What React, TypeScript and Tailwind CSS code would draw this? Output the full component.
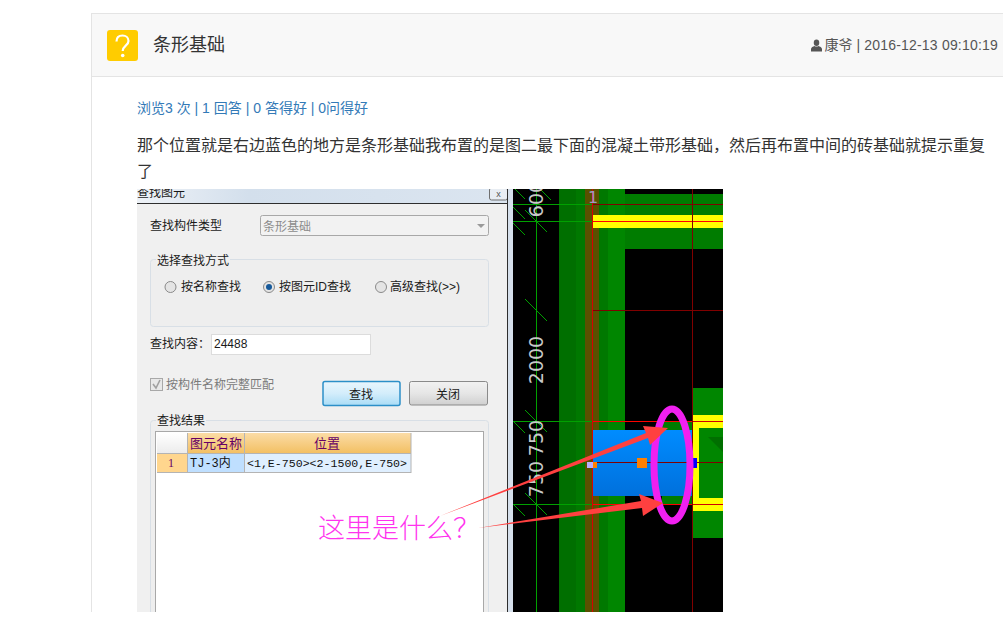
import type { ReactNode } from "react";

const SANS = "font-['Liberation_Sans','Noto_Sans_CJK_SC',sans-serif]";

// dialog label, 12px like the screenshot
function Label({ x, y, children, fill = "#1a1a1a" }: { x: number; y: number; children: ReactNode; fill?: string }) {
  return (
    <text x={x} y={y} fill={fill} fontSize="12" className={SANS}>
      {children}
    </text>
  );
}

function Radio({ cx, cy, on }: { cx: number; cy: number; on?: boolean }) {
  return (
    <g>
      <circle cx={cx} cy={cy} r="5.5" fill="#e4e4e4" stroke="#8a8a8a" />
      {on ? <circle cx={cx} cy={cy} r="3" fill="#16599a" /> : null}
    </g>
  );
}

function Tick({ x, y, size = 11 }: { x: number; y: number; size?: number }) {
  return <line x1={x - size} y1={y - size} x2={x + size} y2={y + size} stroke="#00a000" />;
}

function DimText({ x, y, children }: { x: number; y: number; children: ReactNode }) {
  return (
    <text
      x={x}
      y={y}
      fill="#c8c8c8"
      fontSize="19"
      textAnchor="middle"
      transform={`rotate(-90 ${x} ${y})`}
      className="font-['DejaVu_Sans',sans-serif]"
    >
      {children}
    </text>
  );
}

function Screenshot() {
  return (
    <svg viewBox="137 198 586 423" className="block h-[423px] w-[586px]">
      <defs>
        <linearGradient id="title" x1="0" x2="1" y1="0" y2="0">
          <stop offset="0" stopColor="#eef2f7" />
          <stop offset="0.3" stopColor="#d3dfec" />
          <stop offset="1" stopColor="#dbe5f0" />
        </linearGradient>
        <linearGradient id="btnBlue" x1="0" x2="0" y1="0" y2="1">
          <stop offset="0" stopColor="#eaf6fd" />
          <stop offset="0.5" stopColor="#d3edfb" />
          <stop offset="1" stopColor="#a9dcf6" />
        </linearGradient>
        <linearGradient id="btnGray" x1="0" x2="0" y1="0" y2="1">
          <stop offset="0" stopColor="#f2f2f2" />
          <stop offset="0.5" stopColor="#e6e6e6" />
          <stop offset="1" stopColor="#cfcfcf" />
        </linearGradient>
        <linearGradient id="headOrange" x1="0" x2="0" y1="0" y2="1">
          <stop offset="0" stopColor="#fbdca6" />
          <stop offset="1" stopColor="#f3c064" />
        </linearGradient>
        <linearGradient id="cell" x1="0" x2="0" y1="0" y2="1">
          <stop offset="0" stopColor="#ffffff" />
          <stop offset="1" stopColor="#ececec" />
        </linearGradient>
        <linearGradient id="blueBox" x1="0" x2="0" y1="0" y2="1">
          <stop offset="0" stopColor="#008cff" />
          <stop offset="1" stopColor="#0070dc" />
        </linearGradient>
      </defs>

      {/* dialog */}
      <rect x="137" y="198" width="371" height="423" fill="#f0f0f0" />
      <rect x="137" y="198" width="371" height="14" fill="url(#title)" />
      <line x1="137" x2="508" y1="212.5" y2="212.5" stroke="#2e2e2e" />
      <text x="137" y="206" fontSize="12" fill="#1a1a1a" className={SANS}>查找图元</text>
      <rect x="489.5" y="197" width="18" height="12" rx="2" fill="#e8edf3" stroke="#6f6f6f" />
      <text x="498.5" y="206" fontSize="9" fill="#555" textAnchor="middle" className={SANS}>x</text>
      <rect x="507" y="198" width="1" height="423" fill="#2e2e2e" />
      <rect x="508" y="198" width="5" height="423" fill="#d6e0ec" />

      <Label x={150} y={239}>查找构件类型</Label>
      <rect x="260.5" y="224.5" width="228" height="20" rx="2" fill="#f2f2f2" stroke="#a8a8a8" />
      <Label x={263} y={240} fill="#8c8c8c">条形基础</Label>
      <path d="M477 233h8l-4 4z" fill="#9a9a9a" />

      <rect x="150.5" y="268.5" width="338" height="67" rx="3" fill="#eeeeee" stroke="#d8dfe6" />
      <rect x="156" y="262" width="74" height="13" fill="#f0f0f0" />
      <Label x={157} y={274}>选择查找方式</Label>
      <Radio cx={170.5} cy={296} />
      <Label x={181} y={300}>按名称查找</Label>
      <Radio cx={269} cy={296} on />
      <Label x={279} y={300}>按图元ID查找</Label>
      <Radio cx={381} cy={296} />
      <Label x={390} y={300}>高级查找(&gt;&gt;)</Label>

      <Label x={150} y={357}>查找内容：</Label>
      <rect x="211.5" y="343.5" width="159" height="20" fill="#ffffff" stroke="#dcdcdc" />
      <Label x={214} y={357}>24488</Label>

      <rect x="150.5" y="387.5" width="12" height="12" fill="#e8e8e8" stroke="#a8a8a8" />
      <path d="M153 393l3 4 4-8" fill="none" stroke="#a0a0a0" strokeWidth="1.6" />
      <Label x={166} y={398} fill="#7a7a7a">按构件名称完整匹配</Label>

      <rect x="323" y="390.5" width="77" height="24" rx="2" fill="url(#btnBlue)" stroke="#2c8fc8" strokeWidth="1.5" />
      <text x="361" y="408" fontSize="12" fill="#1a1a1a" textAnchor="middle" className={SANS}>查找</text>
      <rect x="409.5" y="390.5" width="78" height="23.5" rx="2" fill="url(#btnGray)" stroke="#8a8a8a" />
      <text x="448" y="408" fontSize="12" fill="#1a1a1a" textAnchor="middle" className={SANS}>关闭</text>

      <rect x="150.5" y="429.5" width="338" height="200" rx="3" fill="#eeeeee" stroke="#d8dfe6" />
      <rect x="156" y="423" width="50" height="13" fill="#f0f0f0" />
      <Label x={157} y={434}>查找结果</Label>

      {/* result grid */}
      <rect x="155.5" y="440.5" width="328" height="190" fill="#ffffff" stroke="#a8a8a8" />
      <rect x="157" y="442" width="30" height="20" fill="url(#cell)" />
      <rect x="188" y="442" width="56" height="20" fill="url(#headOrange)" />
      <rect x="245" y="442" width="166" height="20" fill="url(#headOrange)" />
      <rect x="157" y="463" width="30" height="18" fill="#ffd68e" />
      <rect x="188" y="463" width="56" height="18" fill="#bfdfff" />
      <rect x="245" y="463" width="166" height="18" fill="#dfefff" />
      <path d="M157 462.5h254M157 481.5h254M187.5 442v40M244.5 442v40M411 442v40" stroke="#b4b4b4" fill="none" />
      <text x="190" y="457" fontSize="13" fill="#660066" className={SANS}>图元名称</text>
      <text x="327" y="457" fontSize="13" fill="#660066" textAnchor="middle" className={SANS}>位置</text>
      <text x="171" y="476" fontSize="12" fill="#660066" textAnchor="middle" className="font-['Liberation_Serif',serif]">1</text>
      <text x="190" y="476" fontSize="12" fill="#111" className="font-['Liberation_Mono','Noto_Sans_CJK_SC',monospace]">TJ-3内</text>
      <text x="247" y="476" fontSize="11.6" fill="#111" className="font-['Liberation_Mono',monospace]">&lt;1,E-750&gt;&lt;2-1500,E-750&gt;</text>

      {/* CAD view */}
      <rect x="513" y="198" width="210" height="423" fill="#000000" />
      <rect x="559" y="198" width="17" height="423" fill="#006f00" />
      <rect x="576" y="198" width="9" height="423" fill="#007800" />
      <rect x="585" y="198" width="14" height="423" fill="#5a5000" />
      <rect x="599" y="198" width="9" height="423" fill="#007800" />
      <rect x="608" y="198" width="17" height="423" fill="#008600" />
      <rect x="625" y="203" width="98" height="55" fill="#007c00" />
      <rect x="593" y="224" width="130" height="13" fill="#ffff00" />
      <rect x="693" y="397" width="30" height="150" fill="#008600" />
      <rect x="662" y="430" width="31" height="83" fill="#007c00" />
      <rect x="693" y="424" width="30" height="96" fill="#ffff00" />
      <rect x="699" y="437" width="24" height="70" fill="#008600" />
      <path d="M708 446l15 15v-15z" fill="#006f00" />
      <rect x="593" y="439" width="99" height="66" fill="url(#blueBox)" />

      {/* axis lines */}
      <path d="M513 213.5h80M513 230.5h80M513 430.5h80M513 513.5h80M536.5 198v423" stroke="#00a000" fill="none" />
      <Tick x={536} y={230} />
      <Tick x={519} y={202} size={6} />
      <Tick x={519} y={222} size={6} />
      <Tick x={519} y={238} size={6} />
      <Tick x={545} y={203} size={6} />
      <Tick x={536} y={319} />
      <Tick x={536} y={430} />
      <Tick x={536} y={513} />
      <Tick x={519} y={436} size={6} />
      <Tick x={519} y={519} size={6} />
      <path d="M592.5 198v423" stroke="#d80000" fill="none" />
      <path d="M593 230.5h130M593 430.5h100M593 513.5h100" stroke="#ff0000" fill="none" />
      <path d="M593 213.5h130M593 319.5h130M593 471.5h130M692.5 198v423" stroke="#800000" fill="none" />
      <path d="M693 430.5h30M693 513.5h30" stroke="#d00000" fill="none" />
      <text x="593" y="212" fontSize="16" fill="#9a9ac4" textAnchor="middle" className="font-['DejaVu_Sans',sans-serif]">1</text>

      <DimText x={543} y={208}>600</DimText>
      <DimText x={543} y={369}>2000</DimText>
      <DimText x={543} y={447}>750</DimText>
      <DimText x={543} y={488}>750</DimText>

      {/* grip points */}
      <rect x="587" y="471" width="6" height="6" fill="#b8b0ff" />
      <rect x="593" y="471" width="4" height="6" fill="#ff8000" />
      <rect x="637" y="467" width="10" height="10" fill="#ff8000" />
      <rect x="688" y="467" width="9" height="10" fill="#0000ff" />

      {/* annotation */}
      <ellipse cx="672" cy="474" rx="18" ry="56" fill="none" stroke="#f020f0" strokeWidth="7" />
      <path d="M440 525L646 442 643 435 668 437 650 454 648 447z" fill="#ff4040" />
      <path d="M478 537L641 510 639 503 663 512 643 525 642 517z" fill="#ff4040" />
      <text x="318" y="547" fontSize="27" fontWeight="300" fill="#ff33ee" className={SANS}>这里是什么？</text>
    </svg>
  );
}

export default function App() {
  return (
    <div className={`h-[621px] w-[1003px] overflow-hidden bg-white pt-[13px] pl-[91px] ${SANS}`}>
      <div className="w-[960px] border-t border-l border-[#e4e4e4]">
        <div className="flex h-[63px] w-[912px] items-center justify-between border-b border-[#e4e4e4] bg-[#f8f8f8] pr-[6px] pl-[15px]">
          <div className="flex items-center gap-[15px]">
            <div className="flex h-[31px] w-[31px] items-center justify-center rounded-[3px] bg-[#ffcc00]">
              <svg viewBox="0 0 31 31" className="h-[31px] w-[31px]">
                <path d="M9.5 11.5c0-4 2.6-6 6-6s6 2.2 6 5.4c0 4.6-5.8 4.8-5.8 10" fill="none" stroke="#ffffff" strokeWidth="2.2" />
                <circle cx="15.7" cy="25.5" r="1.8" fill="#ffffff" />
              </svg>
            </div>
            <span className="text-[18px] text-[#333333]">条形基础</span>
          </div>
          <div className="flex items-center text-[14px] text-[#555555]">
            <svg viewBox="0 0 12 14" className="mr-[3px] h-[13px] w-[11px]" fill="#555555">
              <ellipse cx="6" cy="4" rx="3" ry="3.6" />
              <path d="M0 13.5v-2.6c0-2 2.4-2.9 3.8-3.4 1.3.9 3.1.9 4.4 0 1.4.5 3.8 1.4 3.8 3.4v2.6z" />
            </svg>
            <span>康爷</span>
            <span className="mx-[4px]">|</span>
            <span className="tracking-[0.2px]">2016-12-13 09:10:19</span>
          </div>
        </div>
        <div className="pt-[21px] pl-[45px]">
          <p className="text-[14px] leading-[20px] text-[#337ab7]">
            浏览3 次 <span>|</span> 1 回答 <span>|</span> 0 答得好 <span>|</span> 0问得好
          </p>
          <p className="mt-[15px] w-[860px] text-[16px] leading-[26px] text-[#333333]">
            那个位置就是右边蓝色的地方是条形基础我布置的是图二最下面的混凝土带形基础，然后再布置中间的砖基础就提示重复了
          </p>
          <div className="mt-[4px]">
            <Screenshot />
          </div>
        </div>
      </div>
    </div>
  );
}
